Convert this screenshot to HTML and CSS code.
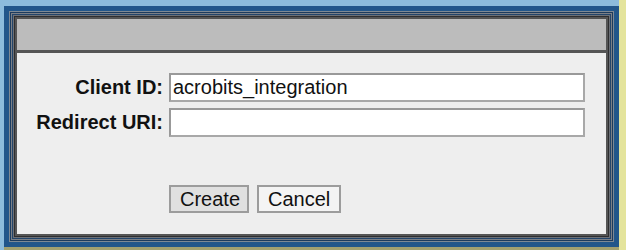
FILE: index.html
```html
<!DOCTYPE html>
<html lang="en">
<head>
    <meta charset="UTF-8">
    <meta name="viewport" content="width=device-width, initial-scale=1.0">
    <title>New Client</title>
    <link rel="stylesheet" href="styles.css">
</head>
<body>
    <div class="desktop">
        <div class="stage">
            <div class="window">
                <div class="frame">
                    <div class="panel">
                        <div class="titlebar"></div>
                        <form class="content" onsubmit="return false">
                            <div class="fields">
                                <label class="label" for="clientId">Client ID:</label>
                                <input type="text" class="field" id="clientId" value="acrobits_integration">
                                <label class="label" for="redirectUri">Redirect URI:</label>
                                <input type="text" class="field" id="redirectUri" value="">
                            </div>
                            <div class="actions">
                                <button class="button primary" type="submit">Create</button>
                                <button class="button" type="button">Cancel</button>
                            </div>
                        </form>
                    </div>
                </div>
            </div>
            <div class="shelf"></div>
        </div>
        <div class="edge"></div>
    </div>
</body>
</html>
```

FILE: styles.css
```css
body {
    margin: 0;
    font-family: "Liberation Sans", Arial, sans-serif;
    background-color: #8dbcdc;
}
.desktop {
    display: flex;
    height: 250px;
    overflow: hidden;
}
.stage {
    flex: 1;
    display: flex;
    flex-direction: column;
    padding: 6px 0 0 4px;
}
.edge {
    width: 7px;
    background-color: #e4e49c;
}
.shelf {
    flex: 1;
    background-color: #a2a070;
}
.window {
    box-sizing: border-box;
    height: 241px;
    padding: 5px;
    background-color: #22568a;
    display: flex;
}
.frame {
    flex: 1;
    display: flex;
    padding: 6px;
    box-shadow:
        inset 0 0 0 1px #7e8994,
        inset 0 0 0 2px #1c3b5e,
        inset 0 0 0 3px #7c8086,
        inset 0 0 0 4px #24456a,
        inset 0 0 0 5px #6c7076,
        inset 0 0 0 6px #2e2e30;
}
.panel {
    flex: 1;
    display: flex;
    flex-direction: column;
    border: 2px solid #555;
    background-color: #eeeeee;
}
.titlebar {
    height: 31px;
    background-color: #bcbcbc;
    border-bottom: 3px solid #555;
}
.content {
    margin: 0;
    padding-top: 20px;
}
.fields {
    display: grid;
    grid-template-columns: 146px 416px;
    column-gap: 6px;
    row-gap: 6px;
    align-items: center;
}
.label {
    text-align: right;
    font-size: 20px;
    font-weight: bold;
    color: #111;
}
.field {
    box-sizing: border-box;
    height: 29px;
    margin: 0;
    padding: 0 2px;
    font-family: inherit;
    font-size: 20px;
    color: #111;
    background-color: #fff;
    border: 2px solid #a8a8a8;
    border-top-color: #999;
    border-left-color: #999;
    outline: none;
}
.actions {
    display: flex;
    gap: 8px;
    margin: 48px 0 0 152px;
}
.button {
    box-sizing: border-box;
    height: 28px;
    padding: 0 9px;
    font-family: inherit;
    font-size: 20px;
    color: #111;
    background-color: #f4f4f4;
    border: 2px solid #9c9c9c;
    cursor: pointer;
}
.button.primary {
    width: 80px;
    background-color: #e0e0e0;
}
```
